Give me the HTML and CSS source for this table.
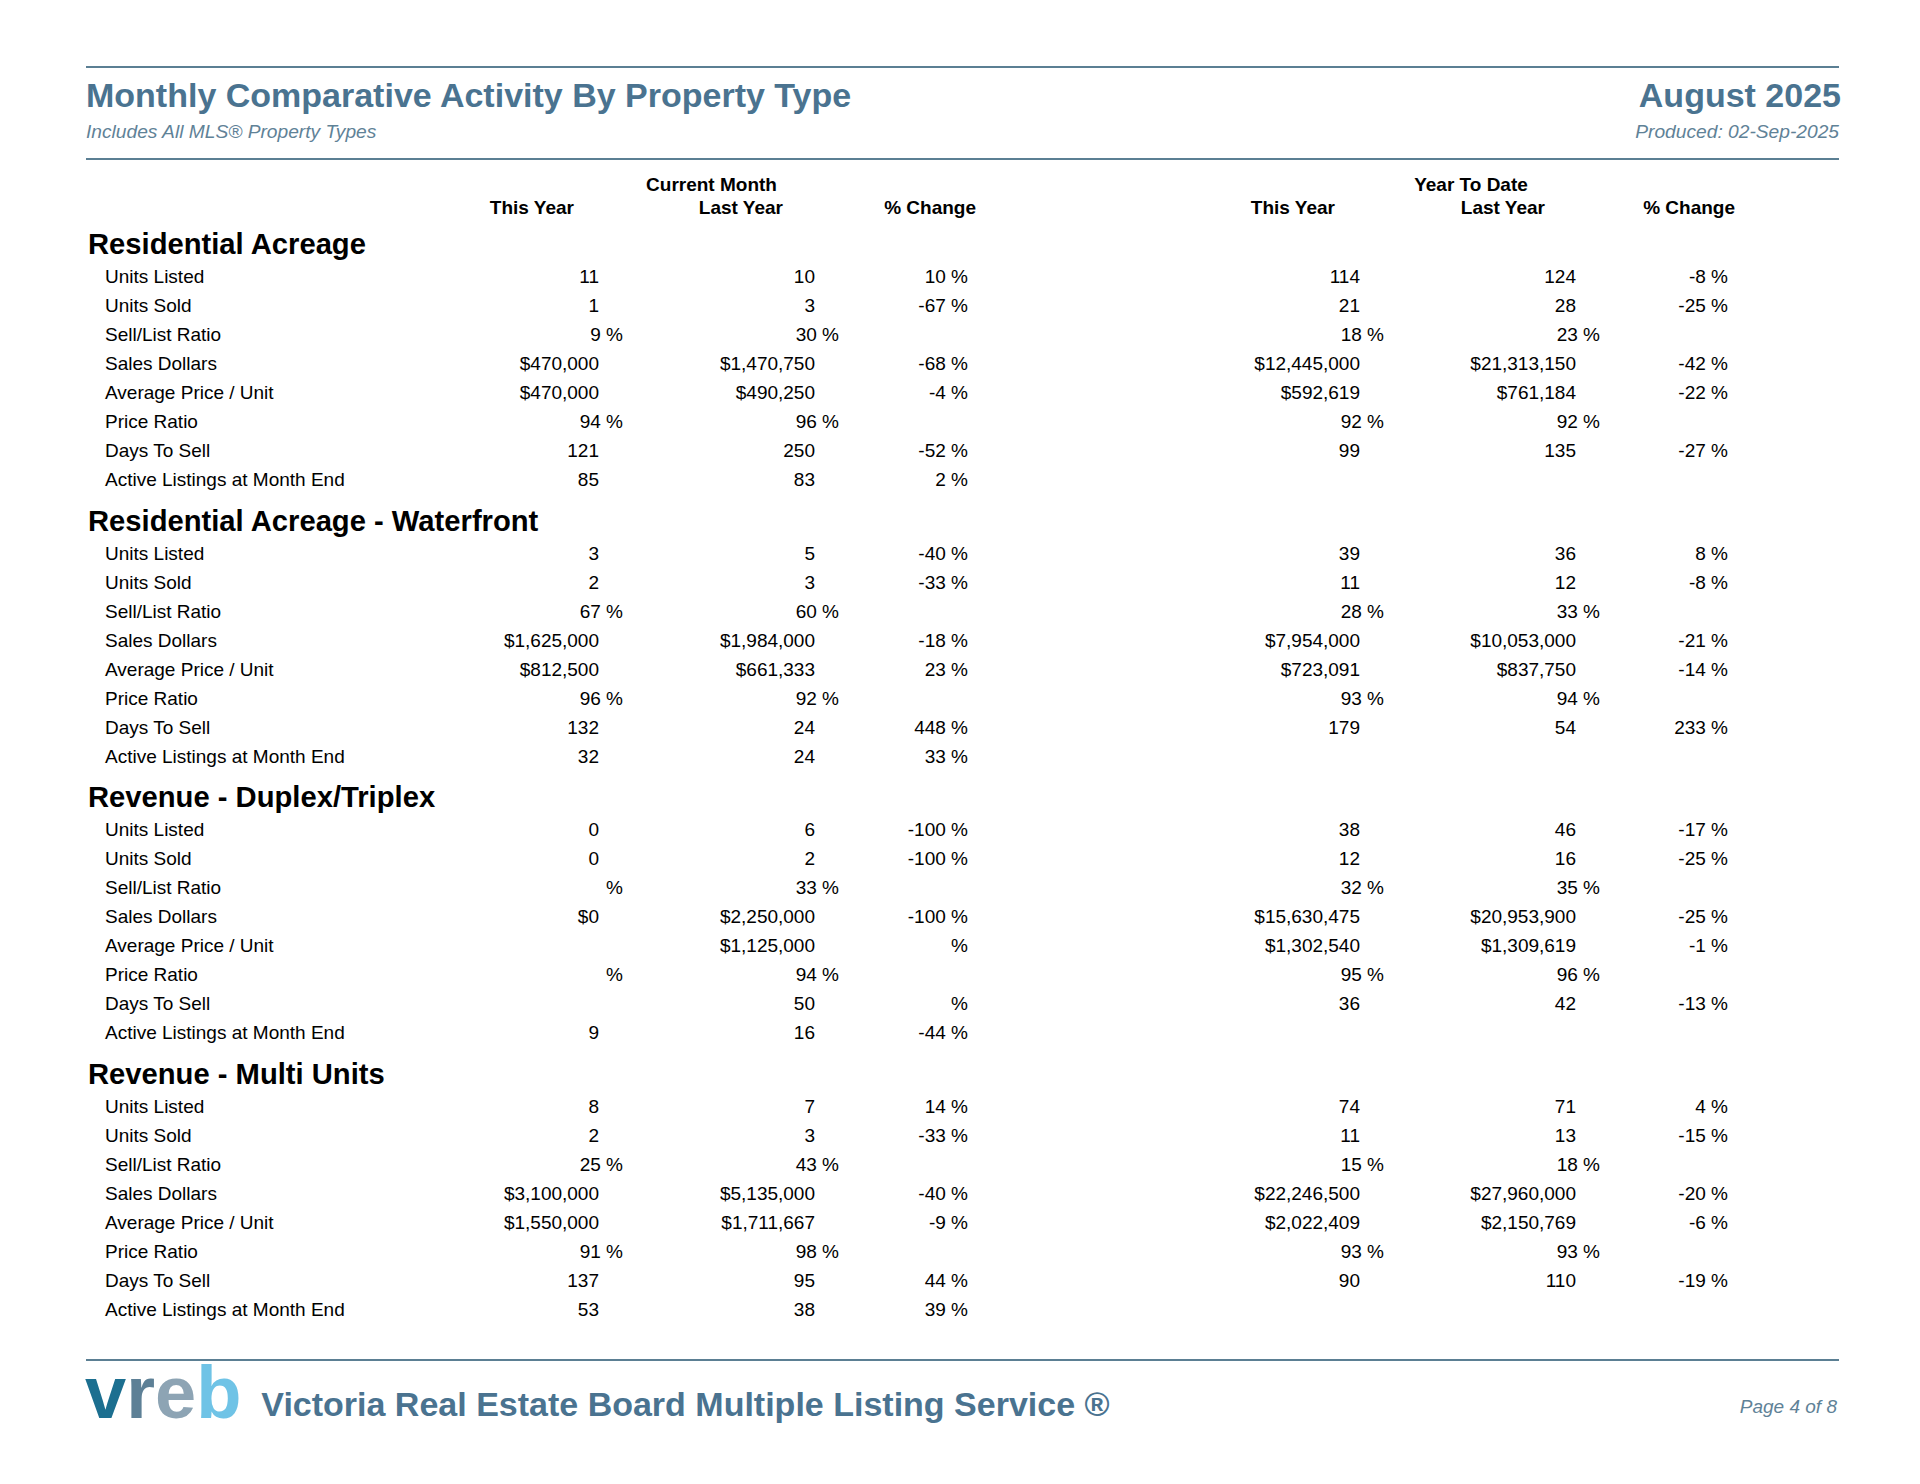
FILE: index.html
```html
<!DOCTYPE html>
<html lang="en">
<head>
<meta charset="utf-8">
<title>Monthly Comparative Activity By Property Type</title>
<link rel="stylesheet" href="styles.css">
</head>
<body>
<div class="page">
  <header class="report-head">
    <div class="head-row">
      <h1 class="title">Monthly Comparative Activity By Property Type</h1>
      <div class="title right">August 2025</div>
    </div>
    <div class="head-row">
      <div class="sub">Includes All MLS® Property Types</div>
      <div class="sub">Produced: 02-Sep-2025</div>
    </div>
  </header>

  <div class="colhead">
    <div class="row h1">
      <div></div><div></div><div class="grp cm">Current Month</div><div></div><div></div><div class="grp ytd">Year To Date</div><div></div><div></div>
    </div>
    <div class="row h2">
      <div></div>
      <div class="hc c1">This Year</div>
      <div class="hc c2">Last Year</div>
      <div class="hc c3">% Change</div>
      <div class="hc c4">This Year</div>
      <div class="hc c5">Last Year</div>
      <div class="hc c6">% Change</div>
      <div></div>
    </div>
  </div>

  <section class="sect">
    <h2 class="sect-title">Residential Acreage</h2>
    <div class="row"><div class="lbl">Units Listed</div><div class="v">11</div><div class="v">10</div><div class="v">10 %</div><div class="v">114</div><div class="v">124</div><div class="v">-8 %</div><div></div></div>
    <div class="row"><div class="lbl">Units Sold</div><div class="v">1</div><div class="v">3</div><div class="v">-67 %</div><div class="v">21</div><div class="v">28</div><div class="v">-25 %</div><div></div></div>
    <div class="row"><div class="lbl">Sell/List Ratio</div><div class="v pr">9 %</div><div class="v pr">30 %</div><div class="v"></div><div class="v pr">18 %</div><div class="v pr">23 %</div><div class="v"></div><div></div></div>
    <div class="row"><div class="lbl">Sales Dollars</div><div class="v">$470,000</div><div class="v">$1,470,750</div><div class="v">-68 %</div><div class="v">$12,445,000</div><div class="v">$21,313,150</div><div class="v">-42 %</div><div></div></div>
    <div class="row"><div class="lbl">Average Price / Unit</div><div class="v">$470,000</div><div class="v">$490,250</div><div class="v">-4 %</div><div class="v">$592,619</div><div class="v">$761,184</div><div class="v">-22 %</div><div></div></div>
    <div class="row"><div class="lbl">Price Ratio</div><div class="v pr">94 %</div><div class="v pr">96 %</div><div class="v"></div><div class="v pr">92 %</div><div class="v pr">92 %</div><div class="v"></div><div></div></div>
    <div class="row"><div class="lbl">Days To Sell</div><div class="v">121</div><div class="v">250</div><div class="v">-52 %</div><div class="v">99</div><div class="v">135</div><div class="v">-27 %</div><div></div></div>
    <div class="row"><div class="lbl">Active Listings at Month End</div><div class="v">85</div><div class="v">83</div><div class="v">2 %</div><div class="v"></div><div class="v"></div><div class="v"></div><div></div></div>
  </section>

  <section class="sect">
    <h2 class="sect-title">Residential Acreage - Waterfront</h2>
    <div class="row"><div class="lbl">Units Listed</div><div class="v">3</div><div class="v">5</div><div class="v">-40 %</div><div class="v">39</div><div class="v">36</div><div class="v">8 %</div><div></div></div>
    <div class="row"><div class="lbl">Units Sold</div><div class="v">2</div><div class="v">3</div><div class="v">-33 %</div><div class="v">11</div><div class="v">12</div><div class="v">-8 %</div><div></div></div>
    <div class="row"><div class="lbl">Sell/List Ratio</div><div class="v pr">67 %</div><div class="v pr">60 %</div><div class="v"></div><div class="v pr">28 %</div><div class="v pr">33 %</div><div class="v"></div><div></div></div>
    <div class="row"><div class="lbl">Sales Dollars</div><div class="v">$1,625,000</div><div class="v">$1,984,000</div><div class="v">-18 %</div><div class="v">$7,954,000</div><div class="v">$10,053,000</div><div class="v">-21 %</div><div></div></div>
    <div class="row"><div class="lbl">Average Price / Unit</div><div class="v">$812,500</div><div class="v">$661,333</div><div class="v">23 %</div><div class="v">$723,091</div><div class="v">$837,750</div><div class="v">-14 %</div><div></div></div>
    <div class="row"><div class="lbl">Price Ratio</div><div class="v pr">96 %</div><div class="v pr">92 %</div><div class="v"></div><div class="v pr">93 %</div><div class="v pr">94 %</div><div class="v"></div><div></div></div>
    <div class="row"><div class="lbl">Days To Sell</div><div class="v">132</div><div class="v">24</div><div class="v">448 %</div><div class="v">179</div><div class="v">54</div><div class="v">233 %</div><div></div></div>
    <div class="row"><div class="lbl">Active Listings at Month End</div><div class="v">32</div><div class="v">24</div><div class="v">33 %</div><div class="v"></div><div class="v"></div><div class="v"></div><div></div></div>
  </section>

  <section class="sect">
    <h2 class="sect-title">Revenue - Duplex/Triplex</h2>
    <div class="row"><div class="lbl">Units Listed</div><div class="v">0</div><div class="v">6</div><div class="v">-100 %</div><div class="v">38</div><div class="v">46</div><div class="v">-17 %</div><div></div></div>
    <div class="row"><div class="lbl">Units Sold</div><div class="v">0</div><div class="v">2</div><div class="v">-100 %</div><div class="v">12</div><div class="v">16</div><div class="v">-25 %</div><div></div></div>
    <div class="row"><div class="lbl">Sell/List Ratio</div><div class="v pr">%</div><div class="v pr">33 %</div><div class="v"></div><div class="v pr">32 %</div><div class="v pr">35 %</div><div class="v"></div><div></div></div>
    <div class="row"><div class="lbl">Sales Dollars</div><div class="v">$0</div><div class="v">$2,250,000</div><div class="v">-100 %</div><div class="v">$15,630,475</div><div class="v">$20,953,900</div><div class="v">-25 %</div><div></div></div>
    <div class="row"><div class="lbl">Average Price / Unit</div><div class="v"></div><div class="v">$1,125,000</div><div class="v">%</div><div class="v">$1,302,540</div><div class="v">$1,309,619</div><div class="v">-1 %</div><div></div></div>
    <div class="row"><div class="lbl">Price Ratio</div><div class="v pr">%</div><div class="v pr">94 %</div><div class="v"></div><div class="v pr">95 %</div><div class="v pr">96 %</div><div class="v"></div><div></div></div>
    <div class="row"><div class="lbl">Days To Sell</div><div class="v"></div><div class="v">50</div><div class="v">%</div><div class="v">36</div><div class="v">42</div><div class="v">-13 %</div><div></div></div>
    <div class="row"><div class="lbl">Active Listings at Month End</div><div class="v">9</div><div class="v">16</div><div class="v">-44 %</div><div class="v"></div><div class="v"></div><div class="v"></div><div></div></div>
  </section>

  <section class="sect">
    <h2 class="sect-title">Revenue - Multi Units</h2>
    <div class="row"><div class="lbl">Units Listed</div><div class="v">8</div><div class="v">7</div><div class="v">14 %</div><div class="v">74</div><div class="v">71</div><div class="v">4 %</div><div></div></div>
    <div class="row"><div class="lbl">Units Sold</div><div class="v">2</div><div class="v">3</div><div class="v">-33 %</div><div class="v">11</div><div class="v">13</div><div class="v">-15 %</div><div></div></div>
    <div class="row"><div class="lbl">Sell/List Ratio</div><div class="v pr">25 %</div><div class="v pr">43 %</div><div class="v"></div><div class="v pr">15 %</div><div class="v pr">18 %</div><div class="v"></div><div></div></div>
    <div class="row"><div class="lbl">Sales Dollars</div><div class="v">$3,100,000</div><div class="v">$5,135,000</div><div class="v">-40 %</div><div class="v">$22,246,500</div><div class="v">$27,960,000</div><div class="v">-20 %</div><div></div></div>
    <div class="row"><div class="lbl">Average Price / Unit</div><div class="v">$1,550,000</div><div class="v">$1,711,667</div><div class="v">-9 %</div><div class="v">$2,022,409</div><div class="v">$2,150,769</div><div class="v">-6 %</div><div></div></div>
    <div class="row"><div class="lbl">Price Ratio</div><div class="v pr">91 %</div><div class="v pr">98 %</div><div class="v"></div><div class="v pr">93 %</div><div class="v pr">93 %</div><div class="v"></div><div></div></div>
    <div class="row"><div class="lbl">Days To Sell</div><div class="v">137</div><div class="v">95</div><div class="v">44 %</div><div class="v">90</div><div class="v">110</div><div class="v">-19 %</div><div></div></div>
    <div class="row"><div class="lbl">Active Listings at Month End</div><div class="v">53</div><div class="v">38</div><div class="v">39 %</div><div class="v"></div><div class="v"></div><div class="v"></div><div></div></div>
  </section>

  <footer class="foot">
    <div class="logo"><span class="lv">v</span><span class="lr">r</span><span class="le">e</span><span class="lb">b</span></div>
    <div class="foot-text">Victoria Real Estate Board Multiple Listing Service ®</div>
    <div class="page-no">Page 4 of 8</div>
  </footer>
</div>
</body>
</html>
```

FILE: styles.css
```css
* { box-sizing: border-box; }
html, body { margin: 0; padding: 0; background: #fff; }
body {
  font-family: "Liberation Sans", Arial, sans-serif;
  color: #000;
}
.page {
  width: 1920px;
  padding: 66px 81px 0 86px;
}
.report-head {
  border-top: 2px solid #5b7f93;
  border-bottom: 2px solid #5b7f93;
  padding: 8px 0 15px;
}
.head-row {
  display: flex;
  justify-content: space-between;
  align-items: flex-start;
}
.title {
  margin: 0;
  font-size: 34px;
  line-height: 38px;
  font-weight: bold;
  color: #4a7390;
}
.title.right { margin-right: -2px; }
.sub {
  margin-top: 7px;
  font-size: 19.2px;
  line-height: 22px;
  font-style: italic;
  color: #5f8297;
}
.row {
  display: grid;
  grid-template-columns: 354px 159px 216px 153px 392px 216px 152px 1fr;
  height: 29px;
  line-height: 29px;
  font-size: 19px;
  white-space: nowrap;
}
.colhead { margin-top: 13px; }
.colhead .row { font-weight: bold; }
.colhead .h1 { height: 23px; line-height: 23px; }
.colhead .h2 { height: 22px; line-height: 23px; }
.grp { text-align: center; }
.grp.cm { padding-left: 9px; }
.grp.ytd { padding-left: 6px; }
.hc { text-align: right; }
.hc.c1 { padding-right: 25px; }
.hc.c2 { padding-right: 32px; }
.hc.c3 { margin-right: -8px; }
.hc.c4 { padding-right: 25px; }
.hc.c5 { padding-right: 31px; }
.hc.c6 { margin-right: -7px; }
.sect { padding-bottom: 0.6px; }
.sect-title {
  margin: 9px 0 1px;
  font-size: 29.2px;
  line-height: 34px;
  font-weight: bold;
  padding-left: 2px;
}
.lbl { padding-left: 19px; }
.v { text-align: right; }
.v.pr { margin-right: -24px; }
.foot {
  margin-top: 35px;
  border-top: 2px solid #5b7f93;
  display: flex;
  align-items: flex-start;
}
.logo {
  margin-top: 2px;
  margin-left: -1px;
  font-size: 74px;
  line-height: 60px;
  letter-spacing: 0;
  font-weight: bold;
  font-family: "Liberation Sans", Arial, sans-serif;
}
.lv { color: #1c6f90; }
.lr { color: #5d8096; }
.le { color: #8da4b4; }
.lb { color: #6fc3e6; }
.foot-text {
  margin-left: 20px;
  margin-top: 23px;
  font-size: 34px;
  line-height: 40px;
  font-weight: bold;
  color: #4a7390;
}
.page-no {
  margin-left: auto;
  margin-right: 2px;
  margin-top: 35px;
  font-size: 19px;
  line-height: 22px;
  font-style: italic;
  color: #5f8297;
}
```
